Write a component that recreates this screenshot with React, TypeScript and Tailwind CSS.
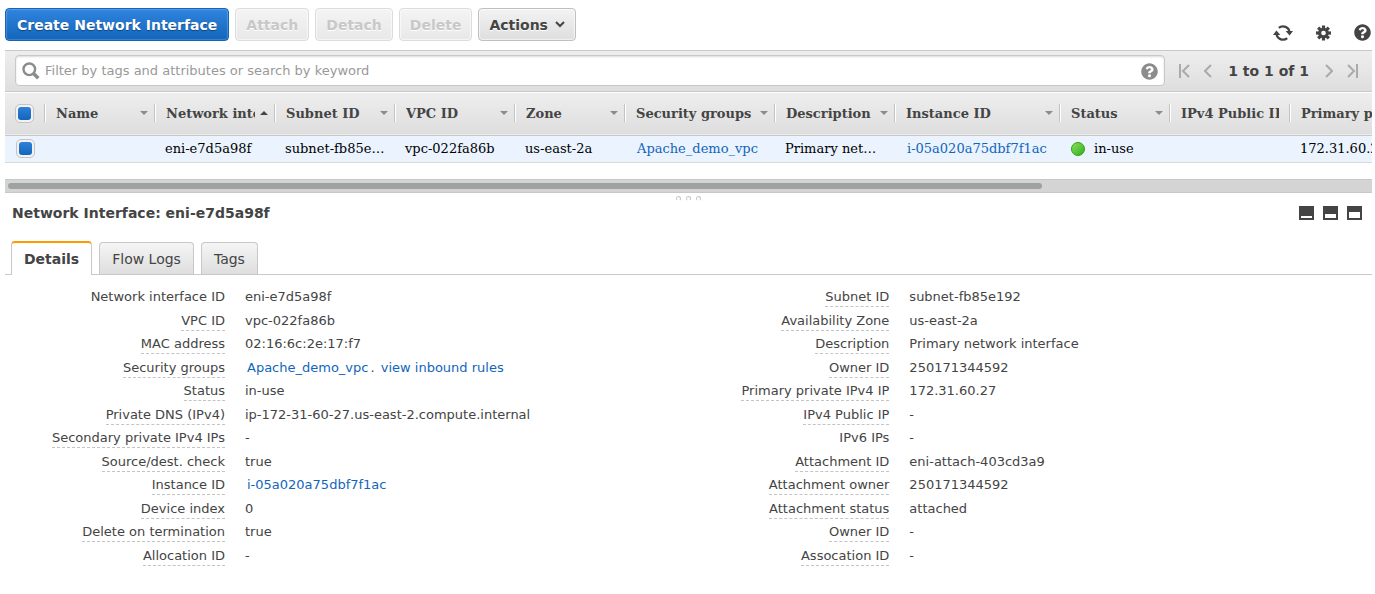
import { useState } from 'react';
import type { ReactNode } from 'react';
import { FaQuestionCircle } from 'react-icons/fa';

function ToolButton({ children, disabled }: { children: ReactNode; disabled?: boolean }) {
  return (
    <button
      type="button"
      disabled={disabled}
      className="flex h-[33px] items-center gap-[7px] rounded border border-[#bfbfbf] bg-gradient-to-b from-[#f3f3f3] to-[#dedede] px-[10px] text-sm font-bold text-[#444] inset-shadow-[0_0_1px_1px_#ffffff99] text-shadow-[0_1px_0_#fff] disabled:border-[#dcdcdc] disabled:from-[#f4f4f4] disabled:to-[#e8e8e8] disabled:text-[#c8c8c8]"
    >
      {children}
    </button>
  );
}

function RefreshIcon() {
  return (
    <svg className="block" width="20" height="16" viewBox="0 0 20 16" fill="none">
      <path d="M3.6 8.5A6.4 6.2 0 0 0 14.2 13.1" stroke="#444" strokeWidth="2.3" />
      <path d="M16.4 7.5A6.4 6.2 0 0 0 5.8 2.9" stroke="#444" strokeWidth="2.3" />
      <path d="M0 10 3.4 5.6 7.4 10Z" fill="#444" />
      <path d="M12.6 6H20L16.6 10.4Z" fill="#444" />
    </svg>
  );
}

function GearIcon() {
  return (
    <svg className="block" width="15" height="16" viewBox="-8 -8 16 16" fill="#444">
      {[0, 45, 90, 135].map((angle) => (
        <rect key={angle} x="-1.7" y="-8" width="3.4" height="16" transform={`rotate(${angle})`} />
      ))}
      <circle r="5.7" />
      <circle r="2.5" fill="#fff" />
    </svg>
  );
}

function PageArrow({ label, path, width }: { label: string; path: string; width: number }) {
  return (
    <button type="button" aria-label={label} className="text-[#aaa]">
      <svg className="block" width={width} height="14" viewBox={`0 0 ${width} 14`} fill="none" stroke="currentColor" strokeWidth="2">
        <path d={path} />
      </svg>
    </button>
  );
}

function Tick({ label }: { label: string }) {
  const [checked, setChecked] = useState(true);
  return (
    <input
      type="checkbox"
      aria-label={label}
      checked={checked}
      onChange={() => setChecked(!checked)}
      className="block size-[19px] appearance-none rounded-[5px] border border-[#c4c4c4] bg-[#f2f2f2] p-[2px] before:block before:size-[13px] before:rounded-[3px] checked:before:bg-gradient-to-b checked:before:from-[#2f80d8] checked:before:to-[#1166bb]"
    />
  );
}

type Column = { name: string; width?: string; sort?: 'up' | 'down' };

const columns: Column[] = [
  { name: 'Name', width: 'w-[110px]', sort: 'down' },
  { name: 'Network interface ID', width: 'w-[120px]', sort: 'up' },
  { name: 'Subnet ID', width: 'w-[120px]', sort: 'down' },
  { name: 'VPC ID', width: 'w-[120px]', sort: 'down' },
  { name: 'Zone', width: 'w-[110px]', sort: 'down' },
  { name: 'Security groups', width: 'w-[150px]', sort: 'down' },
  { name: 'Description', width: 'w-[120px]', sort: 'down' },
  { name: 'Instance ID', width: 'w-[165px]', sort: 'down' },
  { name: 'Status', width: 'w-[110px]', sort: 'down' },
  { name: 'IPv4 Public IP', width: 'w-[120px]' },
  { name: 'Primary private IPv4 IP', sort: 'down' },
];

function HeaderCell({ name, width = '', sort }: Column) {
  return (
    <th className={`${width} p-0 text-left font-bold`}>
      <div className="flex h-[18px] items-center border-l border-white pl-[10px]">
        <span className="min-w-0 flex-1 overflow-hidden pt-px whitespace-nowrap">{name}</span>
        {sort ? (
          <svg className="mr-[6px] ml-[5px] shrink-0" width="8" height="4" viewBox="0 0 8 4">
            {sort === 'up' ? <path d="M0 4 4 0 8 4Z" fill="#444" /> : <path d="M0 0H8L4 4Z" fill="#8c8c8c" />}
          </svg>
        ) : (
          <span className="w-[10px]" />
        )}
        <span className="h-[18px] w-px bg-[#c4c4c4]" />
      </div>
    </th>
  );
}

function Cell({ children }: { children?: ReactNode }) {
  return <td className="truncate px-[10px] py-0">{children}</td>;
}

const link = 'px-[2px] text-[#1166bb]';

type Detail = { label: string; value: ReactNode; plain?: boolean };

const left: Detail[] = [
  { label: 'Network interface ID', value: 'eni-e7d5a98f', plain: true },
  { label: 'VPC ID', value: 'vpc-022fa86b' },
  { label: 'MAC address', value: '02:16:6c:2e:17:f7' },
  {
    label: 'Security groups',
    value: (
      <>
        <a href="#group" className={link}>Apache_demo_vpc</a>. <a href="#rules" className={link}>view inbound rules</a>
      </>
    ),
  },
  { label: 'Status', value: 'in-use' },
  { label: 'Private DNS (IPv4)', value: 'ip-172-31-60-27.us-east-2.compute.internal' },
  { label: 'Secondary private IPv4 IPs', value: '-' },
  { label: 'Source/dest. check', value: 'true' },
  { label: 'Instance ID', value: <a href="#instance" className={link}>i-05a020a75dbf7f1ac</a> },
  { label: 'Device index', value: '0' },
  { label: 'Delete on termination', value: 'true' },
  { label: 'Allocation ID', value: '-' },
];

const right: Detail[] = [
  { label: 'Subnet ID', value: 'subnet-fb85e192' },
  { label: 'Availability Zone', value: 'us-east-2a' },
  { label: 'Description', value: 'Primary network interface' },
  { label: 'Owner ID', value: '250171344592' },
  { label: 'Primary private IPv4 IP', value: '172.31.60.27' },
  { label: 'IPv4 Public IP', value: '-' },
  { label: 'IPv6 IPs', value: '-', plain: true },
  { label: 'Attachment ID', value: 'eni-attach-403cd3a9' },
  { label: 'Attachment owner', value: '250171344592' },
  { label: 'Attachment status', value: 'attached' },
  { label: 'Owner ID', value: '-' },
  { label: 'Assocation ID', value: '-' },
];

function DetailList({ items }: { items: Detail[] }) {
  return (
    <dl className="grid auto-rows-[24px_23px] grid-cols-[220px_1fr] gap-x-5 text-[13px] leading-4">
      {items.map((item, i) => (
        <div key={i} className="contents">
          <dt className="text-right">
            <span className={item.plain ? '' : 'inline-block border-b border-dashed border-[#c4c4c4] pb-px'}>
              {item.label}
            </span>
          </dt>
          <dd className="whitespace-nowrap">{item.value}</dd>
        </div>
      ))}
    </dl>
  );
}

function PaneIcon({ label, top }: { label: string; top: number }) {
  return (
    <button type="button" aria-label={label}>
      <svg className="block" width="15" height="14" viewBox="0 0 15 14">
        <rect width="15" height="14" fill="#444" />
        <rect x="2" y={top} width="11" height={12 - top} fill="#fff" />
      </svg>
    </button>
  );
}

const tabs = ['Details', 'Flow Logs', 'Tags'];

export default function App() {
  const [tab, setTab] = useState('Details');
  return (
    <div className="bg-white pr-[3px] pl-[5px] font-['DejaVu_Sans',sans-serif] text-[#444]">
      <header className="flex h-[50px] items-start justify-between pt-2">
        <div className="flex gap-[6px]">
          <button
            type="button"
            className="h-[33px] rounded border border-[#1166bb] bg-gradient-to-b from-[#2f84de] to-[#1166bb] px-[11px] text-sm font-bold text-white inset-shadow-[0_0_1px_1px_#ffffff33] text-shadow-[0_1px_1px_#00000066]"
          >
            Create Network Interface
          </button>
          <ToolButton disabled>Attach</ToolButton>
          <ToolButton disabled>Detach</ToolButton>
          <ToolButton disabled>Delete</ToolButton>
          <ToolButton>
            Actions
            <svg width="10" height="7" viewBox="0 0 10 7" fill="none">
              <path d="M1 1 5 5 9 1" stroke="#444" strokeWidth="2" />
            </svg>
          </ToolButton>
        </div>
        <div className="flex items-center gap-[23px] pt-4 pr-px">
          <button type="button" aria-label="Refresh" className="pt-px"><RefreshIcon /></button>
          <button type="button" aria-label="Settings"><GearIcon /></button>
          <button type="button" aria-label="Help"><FaQuestionCircle size={17} className="block" /></button>
        </div>
      </header>

      <div className="flex h-[42px] items-start border-y border-[#c8c8c8] bg-gradient-to-b from-[#eee] to-[#dedede] pt-1 pl-[10px]">
        <label className="flex h-[31px] flex-1 items-center gap-[5px] rounded border border-[#c8c8c8] bg-white px-[6px] pt-px inset-shadow-[0_1px_2px_#00000026]">
          <svg width="18" height="18" viewBox="0 0 18 18" fill="none" stroke="#8c8c8c">
            <circle cx="7.3" cy="7.3" r="5.8" strokeWidth="2.4" />
            <path d="M11.5 11.5 16.3 16.3" strokeWidth="3.6" />
          </svg>
          <input
            type="text"
            aria-label="Filter"
            placeholder="Filter by tags and attributes or search by keyword"
            className="min-w-0 flex-1 text-[13px] outline-none placeholder:text-[#999]"
          />
          <FaQuestionCircle size={17} className="text-[#8c8c8c]" />
        </label>
        <nav className="flex h-8 items-center px-[14px]">
          <PageArrow label="First page" width={11} path="M1 0V14M10 1 4 7 10 13" />
          <span className="w-[14px]" />
          <PageArrow label="Previous page" width={8} path="M7 1 1 7 7 13" />
          <span className="px-4 text-sm font-bold whitespace-nowrap">1 to 1 of 1</span>
          <PageArrow label="Next page" width={8} path="M1 1 7 7 1 13" />
          <span className="w-[14px]" />
          <PageArrow label="Last page" width={11} path="M10 0V14M1 1 7 7 1 13" />
        </nav>
      </div>

      <div className="h-[87px] overflow-hidden">
        <table className="w-full min-w-[1435px] table-fixed border-collapse font-['DejaVu_Serif',serif] text-[13px] leading-[18px]">
          <thead>
            <tr className="h-[43px] border-b border-[#c8c8c8] bg-gradient-to-b from-[#eee] to-[#dedede] inset-shadow-[0_1px_0_#fff]">
              <th className="w-[40px] p-0">
                <div className="flex items-center justify-between pl-[10px]">
                  <Tick label="Select all" />
                  <span className="h-[18px] w-px bg-[#c4c4c4]" />
                </div>
              </th>
              {columns.map((c) => (
                <HeaderCell key={c.name} {...c} />
              ))}
            </tr>
          </thead>
          <tbody>
            <tr className="h-[27px] border-b border-[#d8d8d8] bg-[#eaf3fe] text-black">
              <td className="py-0 pr-0 pl-[11px]"><Tick label="Select eni-e7d5a98f" /></td>
              <Cell />
              <Cell>eni-e7d5a98f</Cell>
              <Cell>subnet-fb85e192</Cell>
              <Cell>vpc-022fa86b</Cell>
              <Cell>us-east-2a</Cell>
              <Cell><a href="#group" className={link}>Apache_demo_vpc</a></Cell>
              <Cell>Primary network interface</Cell>
              <Cell><a href="#instance" className={link}>i-05a020a75dbf7f1ac</a></Cell>
              <Cell>
                <span className="flex items-center gap-[9px] pl-px">
                  <span className="size-[14px] rounded-full border border-[#2fa015] bg-gradient-to-br from-[#86e058] to-[#2fae14]" />
                  in-use
                </span>
              </Cell>
              <Cell />
              <Cell>172.31.60.27</Cell>
            </tr>
          </tbody>
        </table>
      </div>

      <div className="h-[14px] border-y border-[#c8c8c8] bg-[#d4d4d4] p-[3px]">
        <div className="h-[6px] w-[76%] rounded-full bg-[#9ea3a2]" />
      </div>

      <section>
        <div className="flex h-[10px] items-center justify-center gap-[5px]">
          <span className="size-[5px] rounded-full border border-[#c8c8c8] border-b-transparent" />
          <span className="size-[5px] rounded-full border border-[#c8c8c8] border-b-transparent" />
          <span className="size-[5px] rounded-full border border-[#c8c8c8] border-b-transparent" />
        </div>
        <div className="flex h-5 items-center justify-between pr-[10px] pl-[7px]">
          <h2 className="text-sm font-bold">Network Interface: eni-e7d5a98f</h2>
          <div className="flex gap-[9px]">
            <PaneIcon label="Minimize pane" top={10} />
            <PaneIcon label="Split pane" top={8} />
            <PaneIcon label="Maximize pane" top={6} />
          </div>
        </div>
        <div role="tablist" className="mt-[18px] flex items-end gap-[7px] border-b border-[#c8c8c8] pl-[6px]">
          {tabs.map((t) => (
            <button
              key={t}
              type="button"
              role="tab"
              aria-selected={t === tab}
              onClick={() => setTab(t)}
              className="h-[32px] rounded-t border border-b-0 border-[#c8c8c8] bg-gradient-to-b from-[#f5f5f5] to-[#dedede] px-3 text-sm aria-selected:-mb-px aria-selected:h-[34px] aria-selected:border-t-2 aria-selected:border-t-[#f90] aria-selected:from-white aria-selected:to-white aria-selected:font-bold"
            >
              {t}
            </button>
          ))}
        </div>
        <div className="grid grid-cols-[48.6%_1fr] pt-[14px]">
          <DetailList items={left} />
          <DetailList items={right} />
        </div>
      </section>
    </div>
  );
}
